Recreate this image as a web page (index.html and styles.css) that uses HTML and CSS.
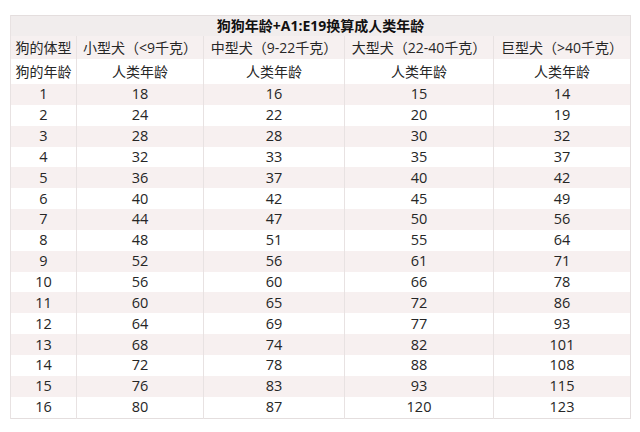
FILE: index.html
```html
<!DOCTYPE html>
<html lang="zh">
<head>
<meta charset="utf-8">
<link rel="stylesheet" href="styles.css">
</head>
<body>
<div class="page">
<table class="grid">
<colgroup>
<col class="c1"><col class="c2"><col class="c3"><col class="c4"><col class="c5">
</colgroup>
<tr class="title"><td colspan="5">狗狗年龄+A1:E19换算成人类年龄</td></tr>
<tr class="head"><td>狗的体型</td><td>小型犬（<9千克）</td><td>中型犬（9-22千克）</td><td>大型犬（22-40千克）</td><td>巨型犬（>40千克）</td></tr>
<tr class="sub"><td>狗的年龄</td><td>人类年龄</td><td>人类年龄</td><td>人类年龄</td><td>人类年龄</td></tr>
<tr class="row"><td>1</td><td>18</td><td>16</td><td>15</td><td>14</td></tr>
<tr class="row"><td>2</td><td>24</td><td>22</td><td>20</td><td>19</td></tr>
<tr class="row"><td>3</td><td>28</td><td>28</td><td>30</td><td>32</td></tr>
<tr class="row"><td>4</td><td>32</td><td>33</td><td>35</td><td>37</td></tr>
<tr class="row"><td>5</td><td>36</td><td>37</td><td>40</td><td>42</td></tr>
<tr class="row"><td>6</td><td>40</td><td>42</td><td>45</td><td>49</td></tr>
<tr class="row"><td>7</td><td>44</td><td>47</td><td>50</td><td>56</td></tr>
<tr class="row"><td>8</td><td>48</td><td>51</td><td>55</td><td>64</td></tr>
<tr class="row"><td>9</td><td>52</td><td>56</td><td>61</td><td>71</td></tr>
<tr class="row"><td>10</td><td>56</td><td>60</td><td>66</td><td>78</td></tr>
<tr class="row"><td>11</td><td>60</td><td>65</td><td>72</td><td>86</td></tr>
<tr class="row"><td>12</td><td>64</td><td>69</td><td>77</td><td>93</td></tr>
<tr class="row"><td>13</td><td>68</td><td>74</td><td>82</td><td>101</td></tr>
<tr class="row"><td>14</td><td>72</td><td>78</td><td>88</td><td>108</td></tr>
<tr class="row"><td>15</td><td>76</td><td>83</td><td>93</td><td>115</td></tr>
<tr class="row"><td>16</td><td>80</td><td>87</td><td>120</td><td>123</td></tr>
</table>
</div>
</body>
</html>
```

FILE: styles.css
```css
html, body {
  margin: 0;
  padding: 0;
  background: #ffffff;
}
.page {
  width: 640px;
  height: 432px;
  padding: 15px 10px 0 10px;
  box-sizing: border-box;
}
.grid {
  width: 620px;
  border-collapse: collapse;
  table-layout: fixed;
  font-family: "Open Sans", "Noto Sans CJK SC", sans-serif;
  font-size: 14.5px;
  color: #262626;
  border: 1px solid #e4dede;
}
.c1 { width: 66px; }
.c2 { width: 127px; }
.c3 { width: 141px; }
.c4 { width: 149px; }
.c5 { width: 137px; }
.grid td {
  padding: 0;
  text-align: center;
  vertical-align: middle;
  line-height: 16px;
  white-space: nowrap;
  border-left: 1px solid #e8e2e2;
  overflow: hidden;
}
.title td {
  height: 20px;
  background: #f1eded;
  font-weight: bold;
  font-size: 14px;
  color: #111111;
}
.head td {
  height: 23px;
  background: #f6f0f0;
  font-size: 14px;
}
.sub td {
  height: 25px;
  background: #ffffff;
  font-size: 14px;
}
.row td {
  height: 20.85px;
}
.row:nth-child(odd) td {
  background: #ffffff;
}
.row:nth-child(even) td {
  background: #f7f0f0;
}
```
